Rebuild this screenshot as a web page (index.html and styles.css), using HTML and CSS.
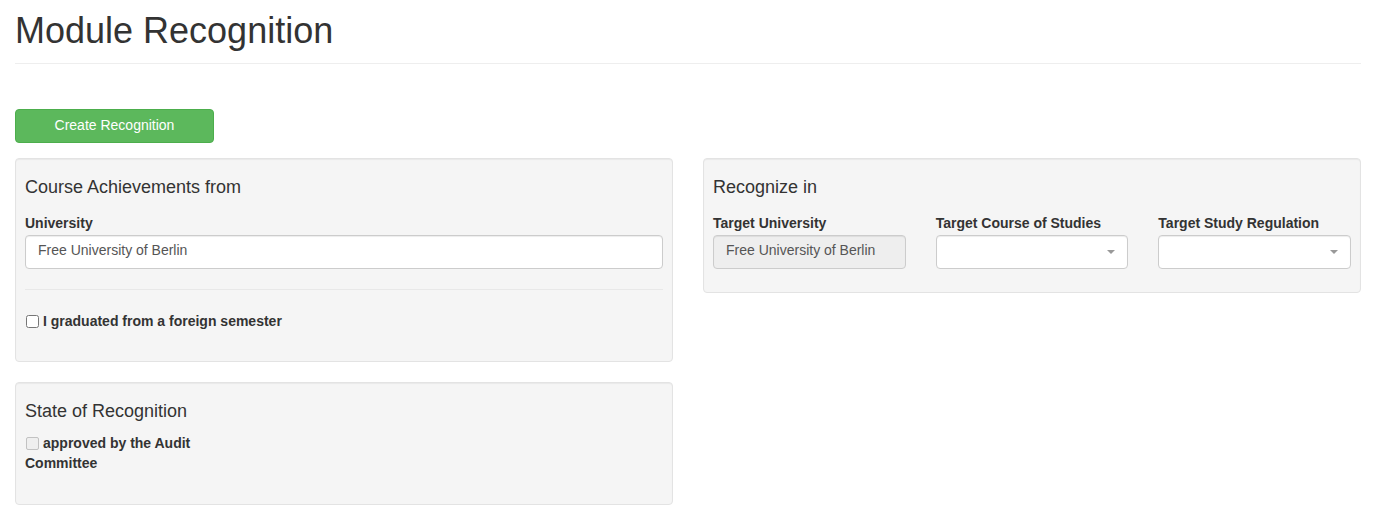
FILE: index.html
```html
<!DOCTYPE html>
<html lang="en">
<head>
<meta charset="utf-8">
<title>Module Recognition</title>
<link rel="stylesheet" href="styles.css">
</head>
<body>
<div class="page">
  <h1 class="page-title">Module Recognition</h1>
  <button class="btn-create" type="button">Create Recognition</button>
  <div class="columns">
    <div class="col-left">
      <section class="well">
        <h4 class="well-title">Course Achievements from</h4>
        <label class="field-label">University</label>
        <div class="text-input">Free University of Berlin</div>
        <hr class="divider">
        <label class="check check-foreign"><input type="checkbox">I graduated from a foreign semester</label>
      </section>
      <section class="well">
        <h4 class="well-title">State of Recognition</h4>
        <label class="check check-approved"><span class="box-disabled"></span>approved by the Audit Committee</label>
      </section>
    </div>
    <div class="col-right">
      <section class="well">
        <h4 class="well-title">Recognize in</h4>
        <div class="target-grid">
          <div class="target-field">
            <label class="field-label">Target University</label>
            <div class="text-input disabled">Free University of Berlin</div>
          </div>
          <div class="target-field">
            <label class="field-label">Target Course of Studies</label>
            <div class="text-input select"></div>
          </div>
          <div class="target-field">
            <label class="field-label">Target Study Regulation</label>
            <div class="text-input select"></div>
          </div>
        </div>
      </section>
    </div>
  </div>
</div>
</body>
</html>
```

FILE: styles.css
```css
* { box-sizing: border-box; }

html, body {
  margin: 0;
  background: #fff;
}

body {
  font-family: "Liberation Sans", Arial, Helvetica, sans-serif;
  font-size: 14px;
  line-height: 20px;
  color: #333;
}

.page {
  padding: 0 12px 0 15px;
}

.page-title {
  margin: 11px 0 0;
  padding-bottom: 12px;
  border-bottom: 1px solid #eee;
  font-size: 36px;
  font-weight: normal;
  line-height: 1.1;
  color: #333;
}

.btn-create {
  display: block;
  margin-top: 45px;
  width: 199px;
  height: 34px;
  padding: 5px 12px 7px;
  background: #5cb85c;
  border: 1px solid #4cae4c;
  border-radius: 4px;
  color: #fff;
  font-family: inherit;
  font-size: 14px;
  line-height: 20px;
  text-align: center;
}

.columns {
  display: grid;
  grid-template-columns: 1fr 1fr;
  column-gap: 30px;
  margin-top: 15px;
  align-items: start;
}

.col-left {
  display: flex;
  flex-direction: column;
  gap: 20px;
}

.well {
  background: #f5f5f5;
  border: 1px solid #e3e3e3;
  border-radius: 4px;
  box-shadow: inset 0 1px 1px rgba(0, 0, 0, 0.05);
  padding: 9px;
}

.well-title {
  margin: 10.5px 0 15px;
  font-size: 18px;
  font-weight: normal;
  line-height: 1.1;
  color: #333;
}

.field-label {
  display: block;
  margin-bottom: 2px;
  font-weight: bold;
  line-height: 20px;
}

.text-input {
  position: relative;
  height: 34px;
  padding: 4px 12px 8px;
  background: #fff;
  border: 1px solid #ccc;
  border-radius: 4px;
  box-shadow: inset 0 1px 1px rgba(0, 0, 0, 0.075);
  color: #555;
  font-size: 14px;
  line-height: 20px;
  white-space: nowrap;
  overflow: hidden;
}

.text-input.disabled {
  background: #eee;
}

.text-input.select::after {
  content: "";
  position: absolute;
  right: 12px;
  top: 50%;
  margin-top: -2px;
  border-style: solid;
  border-width: 4px 4px 0 4px;
  border-color: #999 transparent transparent transparent;
}

.divider {
  margin: 20px 0 21px;
  border: 0;
  border-top: 1px solid #e8e8e8;
  height: 0;
}

.check {
  display: block;
  font-weight: bold;
  line-height: 20px;
}

.check input {
  margin: 0 4px 0 1px;
  width: 13px;
  height: 13px;
  vertical-align: -2px;
}

.box-disabled {
  display: inline-block;
  margin: 0 4px 0 1px;
  width: 13px;
  height: 13px;
  vertical-align: -2px;
  background: #efefef;
  border: 1px solid #c2c2c2;
  border-radius: 2px;
}

.check-foreign {
  margin-bottom: 21px;
}

.check-approved {
  max-width: 200px;
  margin-top: -4px;
  margin-bottom: 22px;
}

.target-grid {
  display: grid;
  grid-template-columns: repeat(3, 1fr);
  column-gap: 30px;
  margin-bottom: 14px;
}
```
